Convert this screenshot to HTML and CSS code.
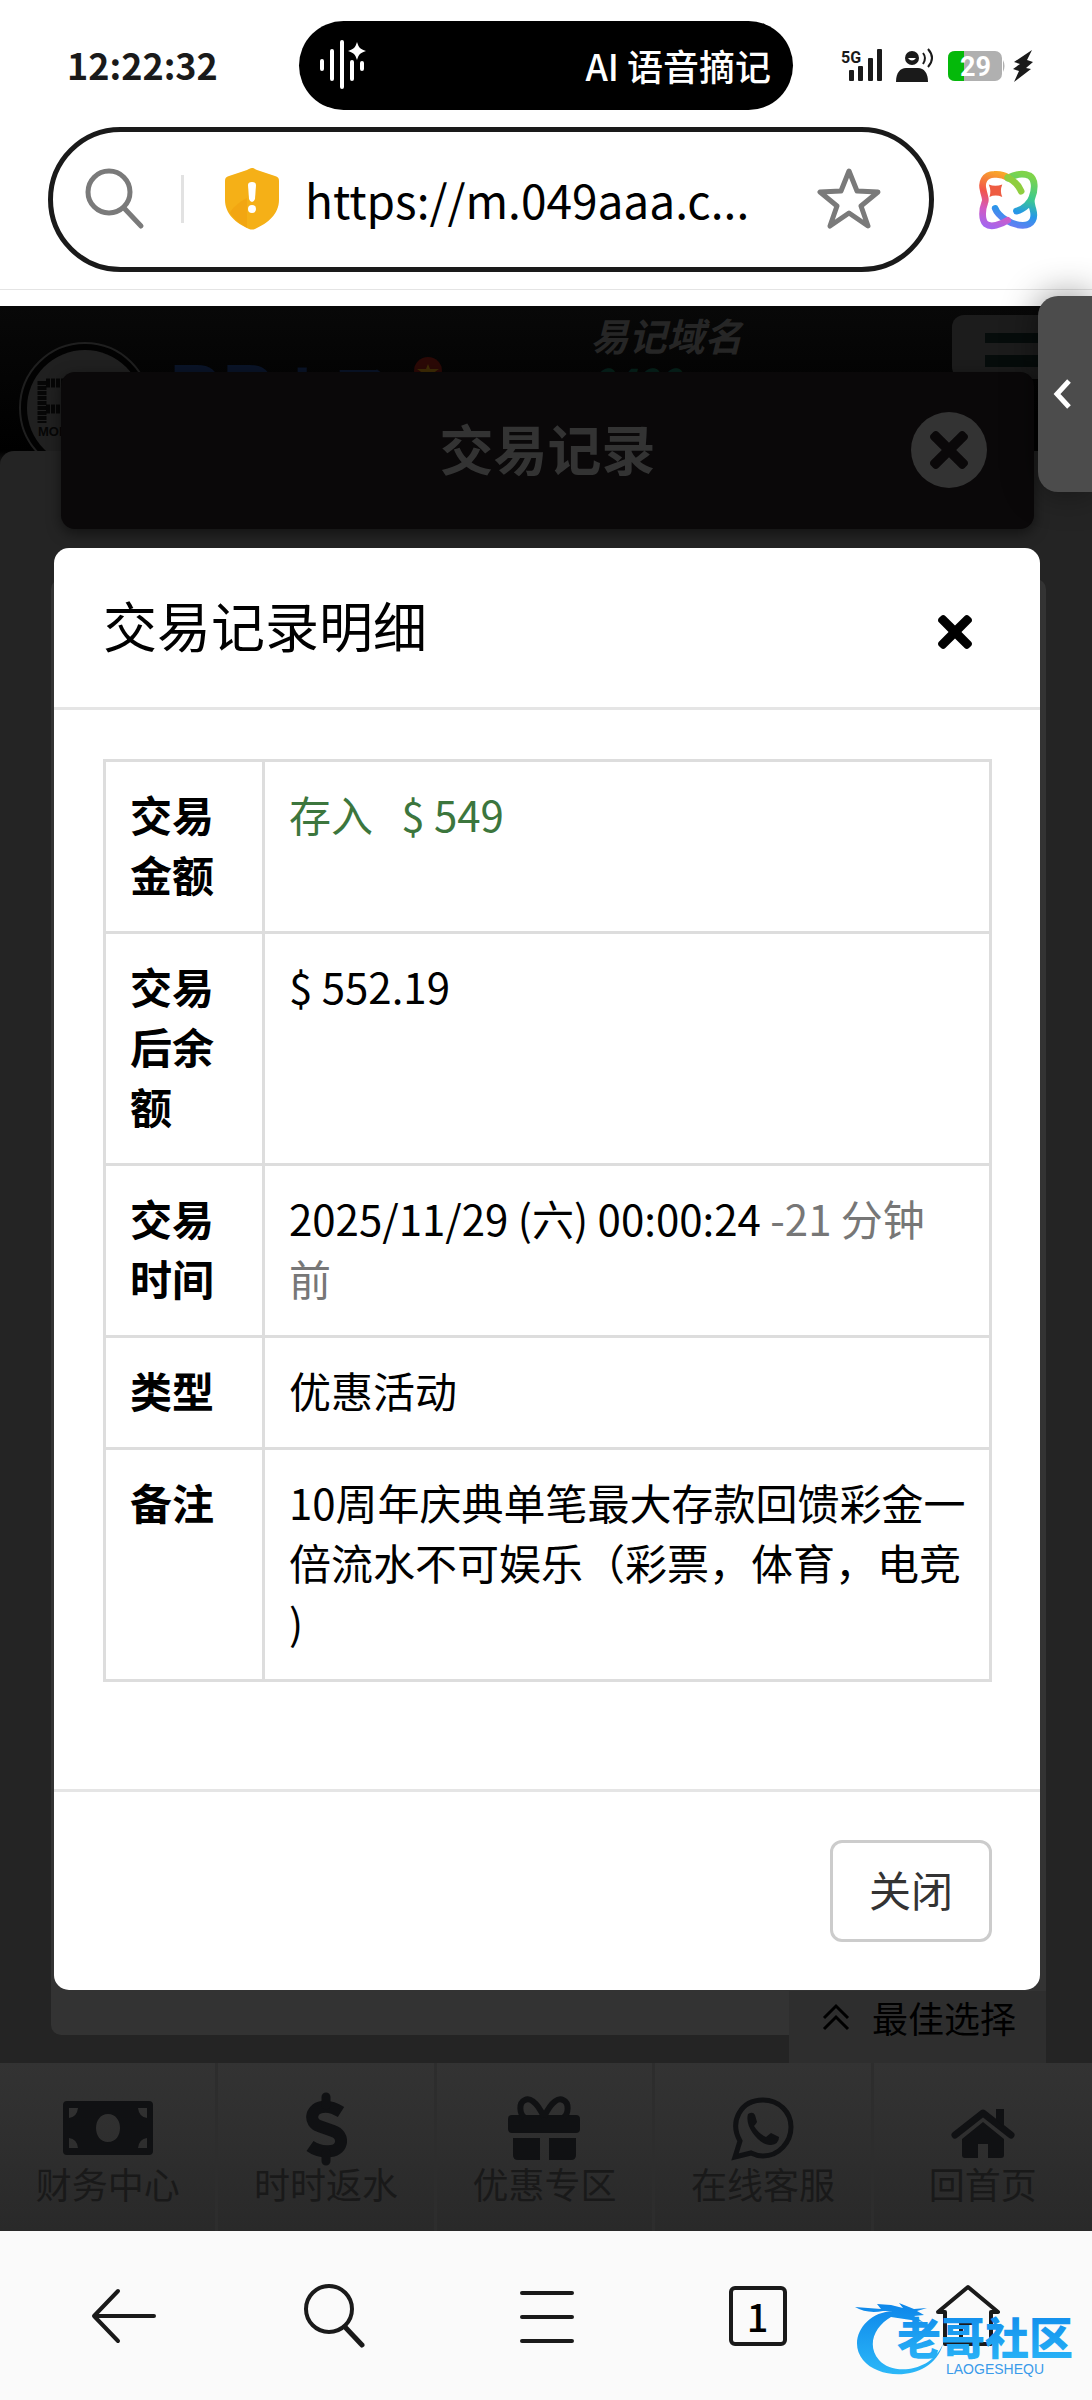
FILE: index.html
```html
<!DOCTYPE html>
<html lang="zh-CN">
<head>
    <meta charset="UTF-8">
    <meta name="viewport" content="width=device-width, initial-scale=1.0">
    <title>交易记录明细</title>
    <link rel="stylesheet" href="styles.css">
</head>

<body>

    <header class="estado">
        <time class="hora">12:22:32</time>
        <div class="isla">
            <svg width="48" height="52" viewBox="0 0 48 52" fill="none" stroke="#fff" stroke-width="4" stroke-linecap="round">
                <path d="M3 22v8M13 12v28M23 3v45M33 23v17M43 24v6"/>
                <path fill="#fff" stroke="none" d="M38 3c2 6 3 7 9 9-6 2-7 3-9 9-2-6-3-7-9-9 6-2 7-3 9-9z"/>
            </svg>
            <span>AI 语音摘记</span>
        </div>
        <div class="senales">
            <svg width="194" height="36" viewBox="0 0 194 36" fill="#1a1a1a">
                <text class="red" x="0" y="15">5G</text>
                <rect x="8" y="22" width="5" height="11" rx="1"/>
                <rect x="17" y="18" width="5" height="15" rx="1"/>
                <rect x="27" y="10" width="5" height="23" rx="1"/>
                <rect x="36" y="1" width="5" height="32" rx="1"/>
                <circle cx="71" cy="10" r="7"/>
                <path d="M55 34c0-9 4-14 10-14h12c6 0 10 5 10 14z"/>
                <path d="M67 10q4 5 8 0z" fill="#fff"/>
                <path d="M82 5q4 5 0 11M87 1q8 9 0 18" fill="none" stroke="#1a1a1a" stroke-width="2"/>
                <rect x="107" y="3" width="54" height="30" rx="7" fill="#b0b0b0"/>
                <path d="M123 3v30h-9q-7 0-7-7V10q0-7 7-7z" fill="#04b90a"/>
                <path d="M162 12q3 6 0 12z" fill="#b0b0b0"/>
                <text class="carga" x="119" y="28">29</text>
                <path d="M191 2l-18 12 6 2-7 5 6 2-5 11 17-13-5-1 7-6-6-2z"/>
            </svg>
        </div>
    </header>

    <div class="navegador">
        <form class="direccion">
            <button type="button" class="icono" aria-label="搜索">
                <svg width="60" height="62" viewBox="0 0 60 62" fill="none" stroke="#7a7a7a" stroke-width="5" stroke-linecap="round">
                    <circle cx="24" cy="24" r="21"/><path d="M39 40l17 18"/>
                </svg>
            </button>
            <span class="separador"></span>
            <svg class="escudo" width="56" height="62" viewBox="0 0 56 62">
                <path fill="#f5b017" d="M28 0c2 0 3 1 5 2l18 6c3 1 4 2 4 5v19c0 14-11 23-24 29q-3 1-6 0C12 55 1 46 1 32V13c0-3 1-4 4-5l18-6c2-1 3-2 5-2z"/>
                <path fill="#f0a00f" d="M23 30c-8 4-15 10-17 15 4 6 10 11 17 15z" opacity=".6"/>
                <path fill="#fff" d="M24 17q0-3 4-3t4 3l-1 14q-1 3-3 3t-3-3z"/>
                <circle cx="28" cy="41" r="4" fill="#fff"/>
            </svg>
            <input type="text" class="url" aria-label="网址" value="https://m.049aaa.c...">
            <button type="button" class="icono" aria-label="收藏">
                <svg width="64" height="62" viewBox="0 0 64 62" fill="none" stroke="#7a7a7a" stroke-width="5" stroke-linejoin="round">
                    <path d="M32 3l8 20 21 1-17 14 7 20-19-13-19 13 7-20L3 24l21-1z"/>
                </svg>
            </button>
        </form>
        <button type="button" class="icono" aria-label="AI">
            <svg width="60" height="60" viewBox="52 58 178 178" fill="none" stroke-width="20" stroke-linecap="round">
                <defs>
                    <linearGradient id="calido" gradientUnits="userSpaceOnUse" x1="130" y1="70" x2="80" y2="225">
                        <stop offset="0" stop-color="#f9a72b"/><stop offset=".4" stop-color="#f2554a"/>
                        <stop offset=".7" stop-color="#d45ac0"/><stop offset="1" stop-color="#a566ee"/>
                    </linearGradient>
                    <linearGradient id="frio" gradientUnits="userSpaceOnUse" x1="190" y1="70" x2="140" y2="225">
                        <stop offset="0" stop-color="#7fd44a"/><stop offset=".4" stop-color="#3cca8e"/>
                        <stop offset=".7" stop-color="#2597e8"/><stop offset="1" stop-color="#6c7cf5"/>
                    </linearGradient>
                </defs>
                <path stroke="url(#frio)" d="M103 172C112 196 150 222 185 222C215 222 222 200 215 175C211 160 207 152 212 140C222 115 222 85 205 75C185 66 160 72 140 82M166 180C188 175 208 155 213 137"/>
                <path stroke="url(#calido)" d="M140 80C128 72 112 70 100 71C70 72 62 95 67 115C70 135 78 145 72 155C64 175 62 205 75 218C90 230 120 220 140 207"/>
                <path stroke="#8fce3f" d="M140 80C160 90 172 102 180 121"/>
                <path fill="#ee5c42" d="M84 101q19 8 40 0-8 19 0 37-20-8-38 0 6-18-2-37z"/>
            </svg>
        </button>
    </div>

    <main class="vista">

        <!-- sitio que queda detras de la ventana -->
        <div class="sitio">
            <div class="cabecera">
                <svg class="logo" width="134" height="134" viewBox="0 0 134 134">
                    <circle cx="67" cy="67" r="65" fill="#020202" stroke="#1f1f1f" stroke-width="2"/>
                    <circle cx="67" cy="67" r="58" fill="#202020"/>
                    <path d="M24 40v42M28 42h24M28 68h24" stroke="#060606" stroke-width="9" stroke-dasharray="4 1" fill="none"/>
                    <text class="sello" x="20" y="95">MOI</text>
                </svg>
                <span class="marca"><span class="letras">PP</span>电子</span>
                <svg class="insignia" width="30" height="30" viewBox="0 0 30 30">
                    <circle cx="15" cy="15" r="14" fill="#2b0906"/>
                    <path d="M15 8l2 5h9l-7 5 3 8-7-5-7 5 3-8-7-5h9z" fill="#3f2c05"/>
                </svg>
                <div class="dominio">易记域名<span>0490</span></div>
                <button type="button" class="menu" aria-label="菜单"></button>
            </div>
            <div class="fondo"></div>
            <nav class="accesos">
                <a href="#">
                    <svg width="92" height="74" viewBox="0 0 92 74" fill="#101113" fill-rule="evenodd">
                        <path d="M5 9h82q4 0 4 4v46q0 4-4 4H5q-4 0-4-4V13q0-4 4-4zM7 16v10q8-1 9-10zM85 16v10q-8-1-9-10zM7 56V46q8 1 9 10zM85 56V46q-8 1-9 10zM46 22c-16 0-16 28 0 28s16-28 0-28z"/>
                    </svg>
                    财务中心
                </a>
                <a href="#">
                    <svg width="42" height="74" viewBox="0 0 42 74" fill="none" stroke="#101113" stroke-width="12">
                        <path d="M36 20C28 15 22 14 17 15C5 17 4 31 14 34L28 39C40 43 38 58 26 59C18 60 12 59 5 54"/>
                        <path stroke-width="9" stroke-linecap="round" d="M21 5v8M21 61v8"/>
                    </svg>
                    时时返水
                </a>
                <a href="#">
                    <svg width="74" height="74" viewBox="0 0 74 74" fill="#101113">
                        <rect x="1" y="23" width="72" height="18" rx="4"/>
                        <path d="M6 46h27v22H11q-5 0-5-5zM42 46h27v17q0 5-5 5H42z"/>
                        <path d="M37 25C29 8 22 6 18 8C11 11 13 22 17 25M37 25C45 8 52 6 56 8C63 11 61 22 57 25" fill="none" stroke="#101113" stroke-width="6"/>
                    </svg>
                    优惠专区
                </a>
                <a href="#">
                    <svg width="64" height="74" viewBox="0 0 64 74">
                        <path d="M4 65l5-16C-2 29 10 8 32 8c16 0 28 12 28 27S48 64 32 64q-6 0-12-3z" fill="none" stroke="#101113" stroke-width="5"/>
                        <path d="M17 22q5-3 7 1l2 7q-1 2-3 4 5 8 12 11l5-4 8 4q0 7-8 8C29 54 13 35 17 22z" fill="#101113"/>
                    </svg>
                    在线客服
                </a>
                <a href="#">
                    <svg width="64" height="74" viewBox="0 0 64 74" fill="#101113">
                        <path d="M4 43L32 21l28 22" fill="none" stroke="#101113" stroke-width="7" stroke-linejoin="round" stroke-linecap="round"/>
                        <path d="M45 17h8v18l-8-7z"/>
                        <path d="M32 30l21 17v16q0 3-3 3H37V52H27v14H14q-3 0-3-3V47z"/>
                    </svg>
                    回首页
                </a>
            </nav>
        </div>

        <!-- listado de registros -->
        <section class="registros">
            <div class="registros-titulo">
                <h2>交易记录</h2>
                <button type="button" class="cerrar-redondo" aria-label="关闭">
                    <svg width="38" height="38" viewBox="0 80 352 352" fill="#0a0809"><path d="M242.72 256l100.07-100.07c12.28-12.28 12.28-32.19 0-44.48l-22.24-22.24c-12.28-12.28-32.19-12.28-44.48 0L176 189.28 75.93 89.21c-12.28-12.28-32.19-12.28-44.48 0L9.21 111.45c-12.28 12.28-12.28 32.19 0 44.48L109.28 256 9.21 356.07c-12.28 12.28-12.28 32.19 0 44.48l22.24 22.24c12.28 12.28 32.2 12.28 44.48 0L176 322.72l100.07 100.07c12.28 12.28 32.2 12.28 44.48 0l22.24-22.24c12.28-12.28 12.28-32.19 0-44.48L242.72 256z"/></svg>
                </button>
            </div>
            <div class="listado"></div>
            <button type="button" class="mejor">
                <svg width="28" height="28" viewBox="0 0 28 28" fill="none" stroke="#000" stroke-width="3"><path d="M2 15L14 3l12 12M2 26l12-12 12 12"/></svg>
                最佳选择
            </button>
        </section>

        <!-- ventana con el detalle -->
        <section class="modal" role="dialog" aria-labelledby="titulo">
            <div class="modal-cabecera">
                <h1 id="titulo">交易记录明细</h1>
                <button type="button" class="icono" aria-label="关闭">
                    <svg width="34" height="34" viewBox="0 80 352 352"><path d="M242.72 256l100.07-100.07c12.28-12.28 12.28-32.19 0-44.48l-22.24-22.24c-12.28-12.28-32.19-12.28-44.48 0L176 189.28 75.93 89.21c-12.28-12.28-32.19-12.28-44.48 0L9.21 111.45c-12.28 12.28-12.28 32.19 0 44.48L109.28 256 9.21 356.07c-12.28 12.28-12.28 32.19 0 44.48l22.24 22.24c12.28 12.28 32.2 12.28 44.48 0L176 322.72l100.07 100.07c12.28 12.28 32.2 12.28 44.48 0l22.24-22.24c12.28-12.28 12.28-32.19 0-44.48L242.72 256z"/></svg>
                </button>
            </div>
            <div class="modal-cuerpo">
                <table>
                    <tr>
                        <th>交易金额</th>
                        <td class="ingreso">存入 &nbsp;&nbsp;$ 549</td>
                    </tr>
                    <tr>
                        <th>交易后余额</th>
                        <td>$ 552.19</td>
                    </tr>
                    <tr>
                        <th>交易时间</th>
                        <td>2025/11/29 (六) 00:00:24 <span class="hace">-21 分钟<br>前</span></td>
                    </tr>
                    <tr>
                        <th>类型</th>
                        <td>优惠活动</td>
                    </tr>
                    <tr>
                        <th>备注</th>
                        <td>10周年庆典单笔最大存款回馈彩金一<br>倍流水不可娱乐（彩票，体育，电竞<br>)</td>
                    </tr>
                </table>
            </div>
            <div class="modal-pie">
                <button type="button" class="boton">关闭</button>
            </div>
        </section>

        <button type="button" class="lateral" aria-label="展开">
            <svg width="18" height="32" viewBox="0 0 18 32" fill="none" stroke="#fff" stroke-width="5"><path d="M16 3L4 16l12 13"/></svg>
        </button>
    </main>

    <footer class="barra">
        <button type="button" class="icono" aria-label="返回">
            <svg width="66" height="64" viewBox="0 0 66 64"><path d="M63 32H3M27 7L3 32l24 25"/></svg>
        </button>
        <button type="button" class="icono" aria-label="搜索">
            <svg width="64" height="64" viewBox="0 0 64 64"><circle cx="26" cy="25" r="23"/><path d="M42 43l17 18" stroke-width="5"/></svg>
        </button>
        <button type="button" class="icono" aria-label="菜单">
            <svg width="54" height="64" viewBox="0 0 54 64"><path d="M2 9h50M2 33h50M2 57h50"/></svg>
        </button>
        <button type="button" class="pestanas" aria-label="标签页">1</button>
        <button type="button" class="icono" aria-label="主页">
            <svg width="66" height="64" viewBox="0 0 66 64"><path d="M10 60V28H3L33 3l30 25h-7v32zM26 60V39h14v21"/></svg>
        </button>

        <svg class="sello-agua" width="222" height="76" viewBox="0 0 222 76">
            <defs>
                <linearGradient id="azul" x1="0" y1="0" x2="0" y2="1">
                    <stop offset="0" stop-color="#0d86ea"/><stop offset="1" stop-color="#2cb8f8"/>
                </linearGradient>
            </defs>
            <path fill="url(#azul)" d="M38 9C10 10-8 38 8 58c18 22 70 20 80-16-12 28-50 32-64 16C11 43 20 24 36 15l20 3 12 2-9-6 10-1-7-4 10-3-13 1-15-6 4 5-12-3-14-1 4 5-26-2q12 7 28 4z"/>
            <text class="agua-nombre" x="42" y="53" fill="url(#azul)">老哥社区</text>
            <text class="agua-sub" x="91" y="72">LAOGESHEQU</text>
        </svg>
    </footer>

</body>
</html>
```

FILE: styles.css
```css
@charset "utf-8";

*{    box-sizing: border-box;    margin: 0;    padding: 0;}

body{
    display: flex;
    flex-direction: column;
    min-height: 100vh;
    background: #fff;
    color: #000;
    font-family: "Noto Sans CJK SC", sans-serif;
    font-size: 42px;
    line-height: 60px;
}

svg{    display: block;    flex: none;}
button{    font: inherit;    color: inherit;    background: none;    border: none;}
a{    color: inherit;    text-decoration: none;}

.icono{
    display: flex;
    align-items: center;
    justify-content: center;
}

/* barra de estado */
.estado{
    display: grid;
    grid-template-columns: 1fr 494px 1fr;
    align-items: center;
    padding: 21px 0 17px;
}

.hora{
    padding: 0 0 4px 67px;
    color: #1a1a1a;
    font-size: 36px;
    font-weight: 700;
}

.isla{
    display: flex;
    align-items: center;
    justify-content: space-between;
    height: 89px;
    padding: 0 22px 2px 20px;
    border-radius: 45px;
    background: #000;
    color: #fff;
    font-size: 36px;
    font-weight: 500;
}

.senales{    padding-left: 48px;}
.red{    font: 700 16px Roboto, sans-serif;}
.carga{    font: 700 27px Roboto, sans-serif;    fill: #fff;}

/* barra de direccion */
.navegador{
    display: flex;
    align-items: center;
    gap: 44px;
    padding: 0 54px 17px 48px;
    border-bottom: 1px solid #e4e4e4;
}

.direccion{
    flex: 1;
    display: flex;
    align-items: center;
    min-width: 0;
    height: 145px;
    padding: 0 48px 2px 32px;
    border: 5px solid #1a1a1a;
    border-radius: 73px;
}

.separador{
    width: 3px;
    height: 48px;
    margin: 0 40px 0 36px;
    background: #e2e2e2;
}

.url{
    flex: 1;
    min-width: 0;
    margin-left: 25px;
    border: none;
    outline: none;
    background: none;
    font: inherit;
    font-size: 46px;
}

/* zona de la pagina: las tres capas comparten la misma celda */
.vista{
    flex: 1;
    position: relative;
    display: grid;
    margin-top: 16px;
}

.sitio, .registros, .modal{    grid-area: 1 / 1;}

.sitio{
    display: flex;
    flex-direction: column;
    background: linear-gradient(#080808, #000 145px, #242424 165px);
}

.cabecera{
    display: flex;
    align-items: flex-start;
    height: 145px;
    padding-left: 18px;
    background: linear-gradient(#080808, #000);
    overflow: hidden;
}

.logo{    margin-top: 35px;}
.sello{    font: 700 13px "Liberation Sans", sans-serif;    fill: #060606;}

.marca{
    margin: 50px 23px 0 16px;
    color: #0a1428;
    font-size: 58px;
    font-weight: 900;
    white-space: nowrap;
}

.letras{    font-family: "DejaVu Sans", sans-serif;    font-size: 72px;    line-height: 1;}
.insignia{    margin-top: 50px;}

.dominio{
    margin: -1px auto 0 148px;
    color: #262626;
    font-size: 38px;
    font-weight: 700;
    font-style: italic;
}

.dominio span{
    display: block;
    color: #06201a;
    line-height: 32px;
}

.menu{
    width: 120px;
    height: 64px;
    margin: 9px 20px 0 0;
    padding: 18px 0 12px 33px;
    border-radius: 12px;
    background: linear-gradient(#060c0b 10px, #1c1c1c 10px, #1c1c1c 22px, #060c0b 22px) content-box, #1c1c1c;
}

.fondo{
    flex: 1;
    border-radius: 14px 14px 0 0;
    background: #242424;
}

.accesos{
    display: grid;
    grid-template-columns: repeat(5, 1fr);
    height: 168px;
    background: linear-gradient(#333, #292929);
}

.accesos a{
    display: flex;
    flex-direction: column;
    align-items: center;
    padding-top: 29px;
    color: #191919;
    font-size: 36px;
    font-weight: 400;
    line-height: 34px;
}

.accesos a:not(:last-child){    border-right: 3px solid #2d2d2d;}

/* registros */
.registros{
    display: flex;
    flex-direction: column;
    padding: 66px 46px 168px 51px;
}

.registros-titulo{
    display: grid;
    grid-template-columns: 1fr auto 1fr;
    align-items: center;
    height: 157px;
    margin: 0 12px 0 10px;
    padding: 0 47px 2px;
    border-radius: 14px;
    background: #0a0809;
    box-shadow: 0 4px 14px rgba(0, 0, 0, .5);
}

.registros-titulo h2{
    grid-column: 2;
    padding-bottom: 4px;
    color: #333;
    font-size: 54px;
    font-weight: 700;
}

.cerrar-redondo{
    display: flex;
    align-items: center;
    justify-content: center;
    justify-self: end;
    width: 76px;
    height: 76px;
    border-radius: 50%;
    background: #333;
}

.listado{
    flex: 1;
    margin: 50px 0 -44px;
    border-radius: 10px;
    background: #333;
}

.mejor{
    display: flex;
    align-items: center;
    align-self: flex-end;
    gap: 22px;
    padding: 0 30px 20px 33px;
    background: #2e2e2e;
    font-size: 36px;
    line-height: 52px;
}

/* ventana */
.modal{
    position: relative;
    align-self: start;
    margin: 242px 52px 0 54px;
    border-radius: 15px;
    background: #fff;
}

.modal-cabecera{
    display: flex;
    align-items: center;
    justify-content: space-between;
    padding: 47px 68px 52px 49px;
    border-bottom: 3px solid #e5e5e5;
}

.modal-cabecera .icono{    padding-top: 14px;}

.modal-cabecera h1{
    font-size: 54px;
    font-weight: 400;
}

.modal-cuerpo{    padding: 49px 48px 107px 49px;}

table{
    width: 100%;
    border-collapse: collapse;
}

th, td{
    padding: 22px 24px 27px;
    border: 3px solid #ddd;
    text-align: left;
    vertical-align: top;
}

th{    width: 159px;    font-weight: 700;}
td{    padding-right: 0;    font-weight: 400;}

.ingreso{    color: #3c763d;}
.hace{    color: #777;}

.modal-pie{
    display: flex;
    justify-content: flex-end;
    padding: 48px;
    border-top: 3px solid #e5e5e5;
}

.boton{
    padding: 16px 36px 20px;
    border: 3px solid #ccc;
    border-radius: 12px;
    color: #333;
}

.lateral{
    position: absolute;
    top: -10px;
    right: 0;
    display: flex;
    align-items: center;
    width: 54px;
    height: 196px;
    padding-left: 15px;
    border-radius: 20px 0 0 20px;
    background: #4c4c4c;
    box-shadow: 0 0 36px rgba(0, 0, 0, .45);
}

/* barra inferior */
.barra{
    position: relative;
    display: flex;
    align-items: center;
    height: 169px;
    padding: 0 18px;
    background: #fafafa;
}

.barra .icono{    flex: 1;}

.barra .icono svg{
    fill: none;
    stroke: #1a1a1a;
    stroke-width: 4px;
    stroke-linecap: round;
    stroke-linejoin: round;
}

.pestanas{
    width: 58px;
    height: 60px;
    margin: 0 76px;
    border: 4px solid #1a1a1a;
    border-radius: 6px;
    font-size: 38px;
    font-weight: 500;
    line-height: 50px;
}

.sello-agua{
    position: absolute;
    right: 15px;
    bottom: 22px;
}

.agua-nombre{    font-size: 44px;    font-weight: 900;}
.agua-sub{    font: 14px "Liberation Sans", sans-serif;    fill: #3a9bea;}
```
